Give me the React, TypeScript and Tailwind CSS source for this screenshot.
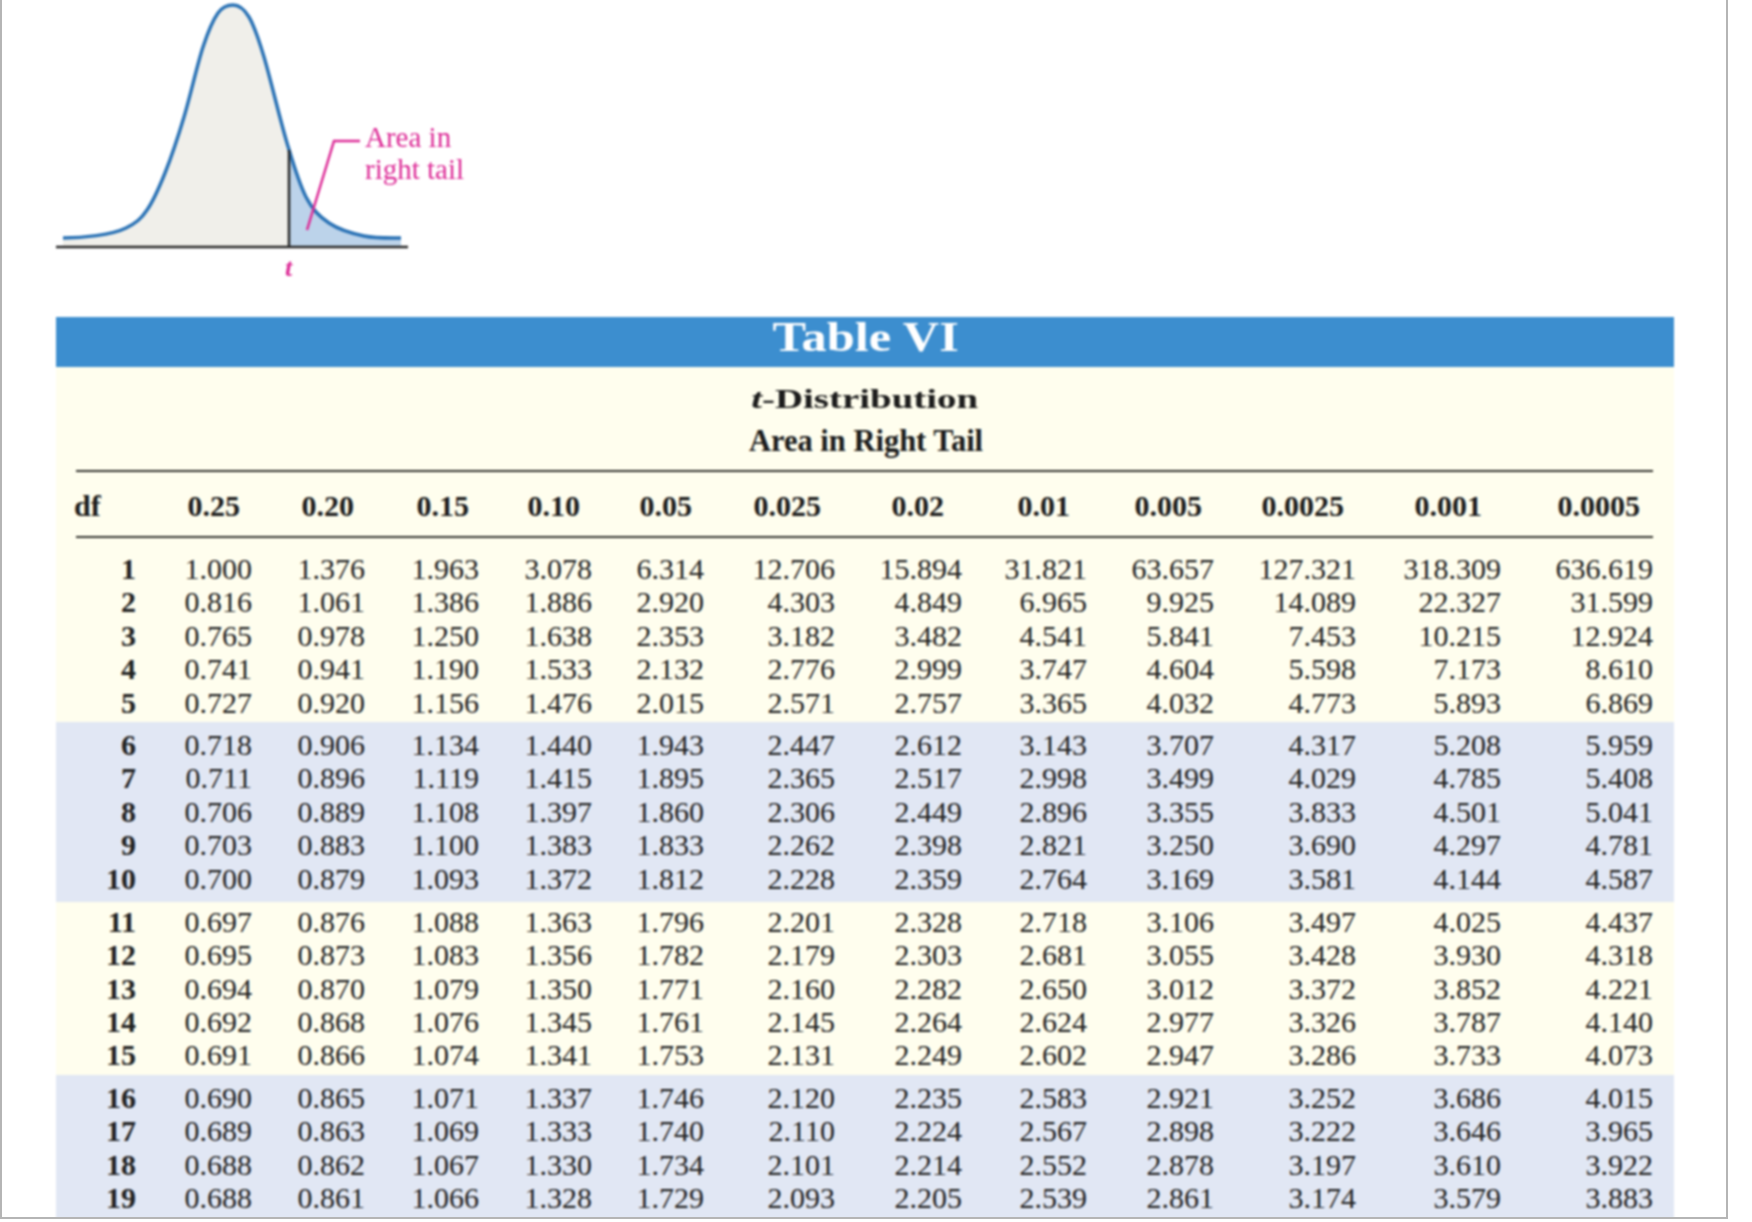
import React from "react";

const serif = "font-['Liberation_Serif','Times_New_Roman',serif]";
const grid =
  "grid grid-cols-[60px_116px_113px_114px_113px_112px_131px_127px_125px_127px_142px_145px_152px]";

const headers = [
  { label: "0.25", pr: "pr-[12px]" },
  { label: "0.20", pr: "pr-[11px]" },
  { label: "0.15", pr: "pr-[10px]" },
  { label: "0.10", pr: "pr-[12px]" },
  { label: "0.05", pr: "pr-[12px]" },
  { label: "0.025", pr: "pr-[14px]" },
  { label: "0.02", pr: "pr-[18px]" },
  { label: "0.01", pr: "pr-[17px]" },
  { label: "0.005", pr: "pr-[12px]" },
  { label: "0.0025", pr: "pr-[12px]" },
  { label: "0.001", pr: "pr-[19px]" },
  { label: "0.0005", pr: "pr-[13px]" },
];

const groups = [
  {
    bg: "bg-[#fffeee] pb-[2px]",
    rows: [
      ["1", "1.000", "1.376", "1.963", "3.078", "6.314", "12.706", "15.894", "31.821", "63.657", "127.321", "318.309", "636.619"],
      ["2", "0.816", "1.061", "1.386", "1.886", "2.920", "4.303", "4.849", "6.965", "9.925", "14.089", "22.327", "31.599"],
      ["3", "0.765", "0.978", "1.250", "1.638", "2.353", "3.182", "3.482", "4.541", "5.841", "7.453", "10.215", "12.924"],
      ["4", "0.741", "0.941", "1.190", "1.533", "2.132", "2.776", "2.999", "3.747", "4.604", "5.598", "7.173", "8.610"],
      ["5", "0.727", "0.920", "1.156", "1.476", "2.015", "2.571", "2.757", "3.365", "4.032", "4.773", "5.893", "6.869"],
    ],
  },
  {
    bg: "bg-[#e1e7f4] pt-[7px] pb-[6px]",
    rows: [
      ["6", "0.718", "0.906", "1.134", "1.440", "1.943", "2.447", "2.612", "3.143", "3.707", "4.317", "5.208", "5.959"],
      ["7", "0.711", "0.896", "1.119", "1.415", "1.895", "2.365", "2.517", "2.998", "3.499", "4.029", "4.785", "5.408"],
      ["8", "0.706", "0.889", "1.108", "1.397", "1.860", "2.306", "2.449", "2.896", "3.355", "3.833", "4.501", "5.041"],
      ["9", "0.703", "0.883", "1.100", "1.383", "1.833", "2.262", "2.398", "2.821", "3.250", "3.690", "4.297", "4.781"],
      ["10", "0.700", "0.879", "1.093", "1.372", "1.812", "2.228", "2.359", "2.764", "3.169", "3.581", "4.144", "4.587"],
    ],
  },
  {
    bg: "bg-[#fffeee] pt-[4px] pb-[2px]",
    rows: [
      ["11", "0.697", "0.876", "1.088", "1.363", "1.796", "2.201", "2.328", "2.718", "3.106", "3.497", "4.025", "4.437"],
      ["12", "0.695", "0.873", "1.083", "1.356", "1.782", "2.179", "2.303", "2.681", "3.055", "3.428", "3.930", "4.318"],
      ["13", "0.694", "0.870", "1.079", "1.350", "1.771", "2.160", "2.282", "2.650", "3.012", "3.372", "3.852", "4.221"],
      ["14", "0.692", "0.868", "1.076", "1.345", "1.761", "2.145", "2.264", "2.624", "2.977", "3.326", "3.787", "4.140"],
      ["15", "0.691", "0.866", "1.074", "1.341", "1.753", "2.131", "2.249", "2.602", "2.947", "3.286", "3.733", "4.073"],
    ],
  },
  {
    bg: "bg-[#e1e7f4] pt-[7px] pb-[10px]",
    rows: [
      ["16", "0.690", "0.865", "1.071", "1.337", "1.746", "2.120", "2.235", "2.583", "2.921", "3.252", "3.686", "4.015"],
      ["17", "0.689", "0.863", "1.069", "1.333", "1.740", "2.110", "2.224", "2.567", "2.898", "3.222", "3.646", "3.965"],
      ["18", "0.688", "0.862", "1.067", "1.330", "1.734", "2.101", "2.214", "2.552", "2.878", "3.197", "3.610", "3.922"],
      ["19", "0.688", "0.861", "1.066", "1.328", "1.729", "2.093", "2.205", "2.539", "2.861", "3.174", "3.579", "3.883"],
    ],
  },
];

const leftCurve =
  "M63 238 C82 238 112 235 126 228 C136 223 141 219 147 210 C153.5 200.8 158.8 188.5 165 173 C171.2 157.5 177.7 138 184 117 C190.3 96 197.3 64.3 203 47 C208.7 29.7 213 20 218 13 C223 6 228 5 233 5 C238 5 243.8 8.3 249 17 C254.2 25.7 257.7 36 264 57 C270.3 78 280 119.7 287 143";
const rightCurve =
  "C294 166.3 299 183.7 306 197 C313 210.3 319.3 216.5 329 223 C338.7 229.5 352 233.5 364 236 C376 238.5 389 238 401 238";

const Curve = () => (
  <svg width="420" height="280" viewBox="0 0 420 280" className="absolute left-[-2px] top-0">
    <path d={`${leftCurve} L289 150 L289 247 L63 247 Z`} fill="#f0efea" />
    <path d={`M287 143 ${rightCurve} L401 247 L289 247 L289 150 Z`} fill="#bcd3ea" />
    <path d={`${leftCurve} ${rightCurve}`} fill="none" stroke="#2a72b5" strokeWidth="3.5" />
    <path d="M56 247 H408" stroke="#262626" strokeWidth="2.5" />
    <path d="M289 150 V247" stroke="#262626" strokeWidth="2.5" />
    <path d="M360 141 H334 L307 230" fill="none" stroke="#dc2a96" strokeWidth="2.5" />
  </svg>
);

const App = () => {
  return (
    <div className={`w-[1728px] h-[1219px] bg-white border-x-2 border-b-2 border-[#b5b5b5] overflow-hidden ${serif}`}>
      <div className="blur-[0.8px]">
        {/* bell curve */}
        <div className="relative h-[317px]">
          <Curve />
          <div className="absolute left-[363px] top-[121px] text-[29px] leading-[32px] text-[#dc2a96]">
            Area in
            <br />
            right tail
          </div>
          <div className="absolute left-[283px] top-[252px] text-[26px] leading-[32px] italic font-bold text-[#dc2a96]">t</div>
        </div>

        <div className="ml-[54px] w-[1618px]">
          <div className="h-[50px] bg-[#3c8ecf] pl-[2px] text-center text-white font-bold text-[42px] leading-[40px]">
            <span className="inline-block scale-x-[1.2]">Table VI</span>
          </div>

          <div className="bg-[#fffeee] h-[186px] pt-[11px] flex flex-col">
            <div className="text-center font-bold text-[#1c1c1c] text-[28px] leading-[42px]">
              <span className="inline-block scale-x-[1.39]">
                <i>t</i>-Distribution
              </span>
            </div>
            <div className="pl-[2px] text-center font-bold text-[#1c1c1c] text-[30.5px] leading-[42px]">Area in Right Tail</div>
            <div className="mt-[8px] ml-[20px] w-[1577px] border-y-2 border-[#33332e] h-[68px]">
              <div className={`${grid} items-center h-full pt-[2px] font-bold text-[30px] text-[#1c1c1c]`}>
                <div className="ml-[-2px]">df</div>
                {headers.map((h) => (
                  <div key={h.label} className={`text-right ${h.pr}`}>
                    {h.label}
                  </div>
                ))}
              </div>
            </div>
          </div>

          {groups.map((g, i) => (
            <div key={i} className={g.bg}>
              {g.rows.map((r) => (
                <div key={r[0]} className={`${grid} ml-[20px] w-[1577px] h-[33.4px] text-[30px] leading-[31.4px] text-[#222222]`}>
                  {r.map((v, j) => (
                    <div key={j} className={j === 0 ? "text-right font-bold" : "text-right"}>
                      {v}
                    </div>
                  ))}
                </div>
              ))}
            </div>
          ))}
        </div>
      </div>
    </div>
  );
};

export default App;
